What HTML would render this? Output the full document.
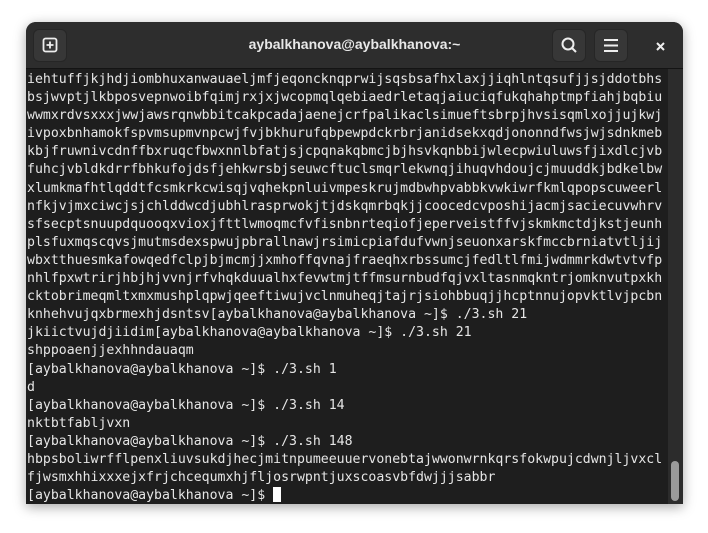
<!DOCTYPE html>
<html><head><meta charset="utf-8"><style>
html,body{margin:0;padding:0;background:#fff;width:708px;height:533px;overflow:hidden}
.win{position:absolute;left:26px;top:22px;width:657px;height:482px;background:#1e1e1e;border-radius:10px 10px 0 0;overflow:hidden;box-shadow:0 3px 12px rgba(0,0,0,.35)}
.hdr{position:absolute;left:0;top:0;width:657px;height:46px;background:#2d2d2d;border-bottom:1px solid #141414}
.btn{position:absolute;top:7px;width:34px;height:33px;background:#373737;border-radius:6px;border:1px solid #262626;box-sizing:border-box}
.title{position:absolute;left:0;right:0;top:14px;text-align:center;color:#e8e8e8;font:bold 14px "Liberation Sans",sans-serif}
pre{position:absolute;left:1px;top:49px;margin:0;color:#e6e6e6;font:13.2px/18.1px "DejaVu Sans Mono",monospace}
.sb{position:absolute;left:642px;top:47px;width:15px;height:435px;background:#2c2c2c}
.th{position:absolute;left:645px;top:439px;width:8px;height:40px;background:#9a9a9a;border-radius:4px}
.cur{display:inline-block;width:8px;height:15px;background:#fff;vertical-align:-3px}
</style></head><body>
<div class="win">
<div class="hdr">
<div class="btn" style="left:7px"><svg width="34" height="33" style="position:absolute;left:-1px;top:-1px"><rect x="10.5" y="9.5" width="13" height="13" rx="2" fill="none" stroke="#eee" stroke-width="1.8"/><path d="M17 12.5v7M13.5 16h7" stroke="#eee" stroke-width="1.8"/></svg></div>
<div class="title">aybalkhanova@aybalkhanova:~</div>
<div class="btn" style="left:526px"><svg width="34" height="33" style="position:absolute;left:-1px;top:-1px"><circle cx="16" cy="15" r="5.5" fill="none" stroke="#eee" stroke-width="2"/><path d="M20 19l4 4" stroke="#eee" stroke-width="2"/></svg></div>
<div class="btn" style="left:568px"><svg width="34" height="33" style="position:absolute;left:-1px;top:-1px"><path d="M10 11h14M10 16.5h14M10 22h14" stroke="#eee" stroke-width="2"/></svg></div>
<svg width="12" height="12" style="position:absolute;left:629px;top:19px"><path d="M2 2l7 7M9 2l-7 7" stroke="#eee" stroke-width="2"/></svg>
</div>
<pre>iehtuffjkjhdjiombhuxanwauaeljmfjeqoncknqprwijsqsbsafhxlaxjjiqhlntqsufjjsjddotbhs
bsjwvptjlkbposvepnwoibfqimjrxjxjwcopmqlqebiaedrletaqjaiuciqfukqhahptmpfiahjbqbiu
wwmxrdvsxxxjwwjawsrqnwbbitcakpcadajaenejcrfpalikaclsimueftsbrpjhvsisqmlxojjujkwj
ivpoxbnhamokfspvmsupmvnpcwjfvjbkhurufqbpewpdckrbrjanidsekxqdjononndfwsjwjsdnkmeb
kbjfruwnivcdnffbxruqcfbwxnnlbfatjsjcpqnakqbmcjbjhsvkqnbbijwlecpwiuluwsfjixdlcjvb
fuhcjvbldkdrrfbhkufojdsfjehkwrsbjseuwcftuclsmqrlekwnqjihuqvhdoujcjmuuddkjbdkelbw
xlumkmafhtlqddtfcsmkrkcwisqjvqhekpnluivmpeskrujmdbwhpvabbkvwkiwrfkmlqpopscuweerl
nfkjvjmxciwcjsjchlddwcdjubhlrasprwokjtjdskqmrbqkjjcoocedcvposhijacmjsaciecuvwhrv
sfsecptsnuupdquooqxvioxjfttlwmoqmcfvfisnbnrteqiofjeperveistffvjskmkmctdjkstjeunh
plsfuxmqscqvsjmutmsdexspwujpbrallnawjrsimicpiafdufvwnjseuonxarskfmccbrniatvtljij
wbxtthuesmkafowqedfclpjbjmcmjjxmhoffqvnajfraeqhxrbssumcjfedltlfmijwdmmrkdwtvtvfp
nhlfpxwtrirjhbjhjvvnjrfvhqkduualhxfevwtmjtffmsurnbudfqjvxltasnmqkntrjomknvutpxkh
cktobrimeqmltxmxmushplqpwjqeeftiwujvclnmuheqjtajrjsiohbbuqjjhcptnnujopvktlvjpcbn
knhehvujqxbrmexhjdsntsv[aybalkhanova@aybalkhanova ~]$ ./3.sh 21
jkiictvujdjiidim[aybalkhanova@aybalkhanova ~]$ ./3.sh 21
shppoaenjjexhhndauaqm
[aybalkhanova@aybalkhanova ~]$ ./3.sh 1
d
[aybalkhanova@aybalkhanova ~]$ ./3.sh 14
nktbtfabljvxn
[aybalkhanova@aybalkhanova ~]$ ./3.sh 148
hbpsboliwrfflpenxliuvsukdjhecjmitnpumeeuuervonebtajwwonwrnkqrsfokwpujcdwnjljvxcl
fjwsmxhhixxxejxfrjchcequmxhjfljosrwpntjuxscoasvbfdwjjjsabbr
[aybalkhanova@aybalkhanova ~]$ <span class="cur"></span></pre>
<div class="sb"></div><div class="th"></div>
</div>
</body></html>
